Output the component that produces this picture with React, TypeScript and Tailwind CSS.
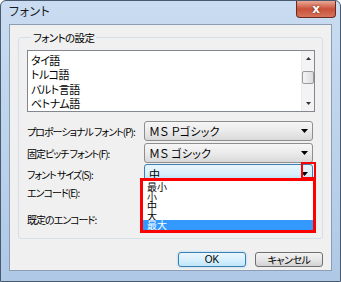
import React from "react";

const jp = "font-['Noto_Sans_CJK_JP',sans-serif] [font-feature-settings:'palt']";

function Arrow() {
  return (
    <svg width="7" height="4" viewBox="0 0 7 4" className="shrink-0">
      <path d="M0 0h7L3.5 4z" fill="#000" />
    </svg>
  );
}

function Combo({ text, active = false }: { text: string; active?: boolean }) {
  return (
    <div
      className={
        "flex-1 h-[20px] flex items-center justify-between rounded-[3px] border pl-[4px] pr-[4px] " +
        (active
          ? "border-[#3c7fb1] bg-gradient-to-b from-[#e8f5fc] via-[#d9f0fc] to-[#a9daf5]"
          : "border-[#8e8e8e] bg-gradient-to-b from-[#f6f6f6] via-[#ebebeb] to-[#d9d9d9]")
      }
    >
      <span className="text-[11px] leading-[14px] text-black tracking-[0.2px] whitespace-nowrap">{text}</span>
      <Arrow />
    </div>
  );
}

function Row({ label, children, className = "" }: { label: string; children?: React.ReactNode; className?: string }) {
  return (
    <div className={"flex items-center " + className}>
      <span className="w-[117px] shrink-0 whitespace-nowrap text-[10px] leading-[13px] text-black tracking-[-1px]">{label}</span>
      {children}
    </div>
  );
}

const langs = ["タイ語", "トルコ語", "バルト言語", "ベトナム語"];
const sizes = ["最小", "小", "中", "大"];

export default function App() {
  return (
    <div className={"relative w-[341px] h-[282px] flex flex-col px-[8px] pb-[10px] rounded-t-[6px] border border-[#4a5a6e] bg-gradient-to-b from-[#c9dcf1] via-[#bcd3ec] to-[#aec8e6] overflow-hidden " + jp}>
      {/* title bar */}
      <div className="h-[23px] flex items-start justify-between shrink-0">
        <span className="mt-[3px] text-[12px] leading-[14px] text-[#1a1a1a] tracking-[0.5px]">フォント</span>
        <div className="-mr-[4px] w-[40px] h-[17px] rounded-b-[4px] border border-[#6b2a20] border-t-0 bg-gradient-to-b from-[#e9a796] via-[#c8513a] to-[#d7735c] flex items-center justify-center">
          <span className="font-['DejaVu_Sans',sans-serif] text-[12px] font-bold leading-none text-white [text-shadow:0_0_2px_#5a1c12]">x</span>
        </div>
      </div>

      {/* client */}
      <div className="flex-1 flex flex-col border border-[#8c9db3] bg-[#f0f0f0] px-[8px]">
        <fieldset className="mt-[6px] border border-[#d5dfe5] rounded-[3px] pl-[8px] pr-[7px] pb-[11px]">
          <legend className="ml-[4px] px-[2px] text-[10.5px] leading-[13px] text-black tracking-[-0.6px]">フォントの設定</legend>

          {/* listbox */}
          <div className="mt-[6px] h-[62px] flex border border-[#828790] bg-white">
            <div className="flex-1 pl-[3px] pt-[2px]">
              {langs.map((l) => (
                <div key={l} className="h-[14.3px] text-[11px] leading-[14px] text-black tracking-[-0.5px]">
                  {l}
                </div>
              ))}
            </div>
            <div className="w-[13px] flex flex-col items-center bg-[#f3f3f3] border-l border-[#ececec]">
              <svg width="5" height="3" viewBox="0 0 5 3" className="mt-[6px]">
                <path d="M2.5 0L5 3H0z" fill="#333" />
              </svg>
              <div className="mt-[11px] w-[12px] h-[13px] rounded-[2px] border border-[#9a9a9a] bg-gradient-to-r from-[#f4f4f4] to-[#dcdcdc]" />
              <div className="flex-1" />
              <svg width="5" height="3" viewBox="0 0 5 3" className="mb-[6px]">
                <path d="M0 0h5L2.5 3z" fill="#333" />
              </svg>
            </div>
          </div>

          <Row label="プロポーショナル フォント(P):" className="mt-[9px] pr-[2px]">
            <Combo text="ＭＳ Ｐゴシック" />
          </Row>
          <Row label="固定ピッチ フォント(F):" className="mt-[2px] pr-[2px]">
            <Combo text="ＭＳ ゴシック" />
          </Row>
          <Row label="フォント サイズ(S):" className="mt-[1px] pr-[2px]">
            <Combo text="中" active />
          </Row>
          <Row label="エンコード(E):" className="h-[16px]" />
          <Row label="既定のエンコード:" className="mt-[11px] h-[16px]" />
        </fieldset>

        <div className="mt-[13px] flex justify-end gap-[9px]">
          <div className="w-[68px] h-[15px] rounded-[3px] border border-[#3c7fb1] bg-gradient-to-b from-[#eaf6fd] via-[#d9f0fc] to-[#bee6fd] flex items-center justify-center shadow-[0_0_2px_#7fc5ee]">
            <span className="font-['Liberation_Sans',sans-serif] text-[10px] leading-none text-black">OK</span>
          </div>
          <div className="w-[68px] h-[15px] rounded-[3px] border border-[#707070] bg-gradient-to-b from-[#f2f2f2] via-[#e6e6e6] to-[#d2d2d2] flex items-center justify-center">
            <span className="text-[10px] leading-none text-black tracking-[-0.5px]">キャンセル</span>
          </div>
        </div>
      </div>

      {/* red annotation around the dropdown arrow */}
      <div className="absolute left-[300px] top-[161px] w-[15px] h-[17px] border-2 border-[#ff0000]" />

      {/* open dropdown list with red annotation */}
      <div className="absolute left-[139px] top-[177px] w-[176px] h-[55px] border-[3px] border-[#ff0000] bg-white overflow-hidden">
        <div className="h-full pt-[1px] flex flex-col">
          {sizes.map((s) => (
            <div key={s} className="h-[9.6px] pl-[4px] text-[10px] leading-[9.6px] text-black">
              {s}
            </div>
          ))}
          <div className="flex-1 bg-[#3399ff] pl-[4px] text-[10px] leading-[10px] text-white">最大</div>
        </div>
      </div>
    </div>
  );
}
